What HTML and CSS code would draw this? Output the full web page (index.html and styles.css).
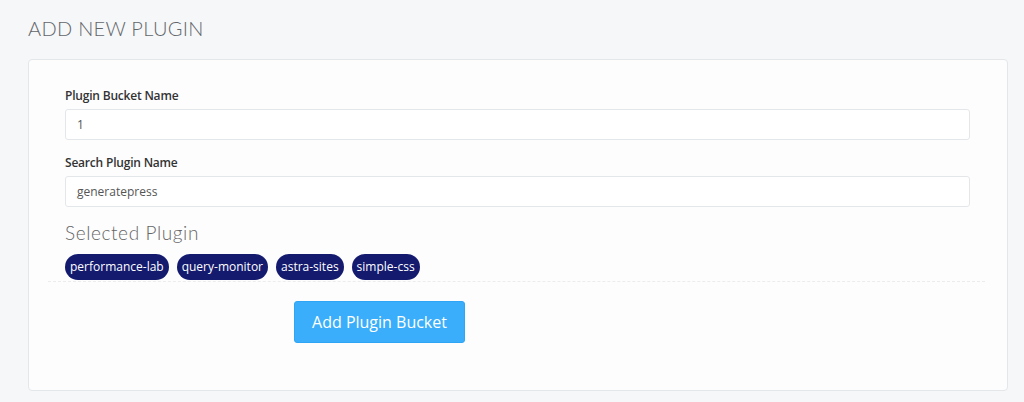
FILE: index.html
```html
<!DOCTYPE html>
<html>
<head>
<meta charset="utf-8">
<link rel="stylesheet" href="styles.css">
</head>
<body>
<div class="page">
  <h1 class="title">ADD NEW PLUGIN</h1>
  <div class="card">
    <div class="field">
      <label class="label">Plugin Bucket Name</label>
      <div class="input">1</div>
    </div>
    <div class="field">
      <label class="label">Search Plugin Name</label>
      <div class="input">generatepress</div>
    </div>
    <h2 class="subtitle">Selected Plugin</h2>
    <div class="badges">
      <span class="badge">performance-lab</span>
      <span class="badge">query-monitor</span>
      <span class="badge">astra-sites</span>
      <span class="badge">simple-css</span>
    </div>
    <div class="sep"></div>
    <div class="actions">
      <button class="btn">Add Plugin Bucket</button>
    </div>
  </div>
</div>
</body>
</html>
```
FILE: styles.css
```css
html, body {
  margin: 0;
  padding: 0;
  background: #f6f7f8;
  font-family: "Open Sans", "Liberation Sans", sans-serif;
}
.page {
  padding: 0 16px 0 28px;
  height: 402px;
  box-sizing: border-box;
}
.title {
  margin: 0;
  padding-top: 16px;
  height: 59px;
  box-sizing: border-box;
  font-family: "Lato", sans-serif;
  font-weight: 300;
  font-size: 20px;
  line-height: 24px;
  letter-spacing: 0.3px;
  color: #62666b;
}
.card {
  width: 980px;
  height: 332px;
  box-sizing: border-box;
  background: #fdfdfd;
  border: 1px solid #e3e7ea;
  border-radius: 4px;
  padding: 27px 37px 0 36px;
}
.field {
  display: flex;
  flex-direction: column;
  margin-bottom: 14px;
}
.label {
  font-size: 12px;
  font-weight: 600;
  line-height: 17px;
  color: #333;
  margin-bottom: 5px;
  letter-spacing: -0.2px;
}
.input {
  height: 31px;
  box-sizing: border-box;
  border: 1px solid #e4e7ea;
  border-radius: 3px;
  background: #fff;
  padding: 0 11px;
  font-size: 12px;
  line-height: 29px;
  color: #555;
}
.subtitle {
  margin: 5px 0 0;
  font-family: "Lato", sans-serif;
  font-weight: 300;
  font-size: 19px;
  line-height: 24px;
  color: #666;
  letter-spacing: 0.6px;
}
.badges {
  display: flex;
  gap: 8px;
  margin-top: 9px;
}
.badge {
  background: #141a6e;
  color: #fff;
  font-size: 12px;
  line-height: 26px;
  height: 26px;
  padding: 0 5px;
  border-radius: 13px;
}
.sep {
  margin: 1px -15px 0 -17px;
  border-top: 1px dashed #ececec;
}
.actions {
  padding-left: 229px;
  margin-top: 19px;
}
.btn {
  width: 171px;
  height: 42px;
  border: 1px solid #2fa6f5;
  border-radius: 3px;
  background: #3aaefa;
  color: #fff;
  font-family: "Open Sans", sans-serif;
  font-size: 16px;
  padding: 0;
}
```
